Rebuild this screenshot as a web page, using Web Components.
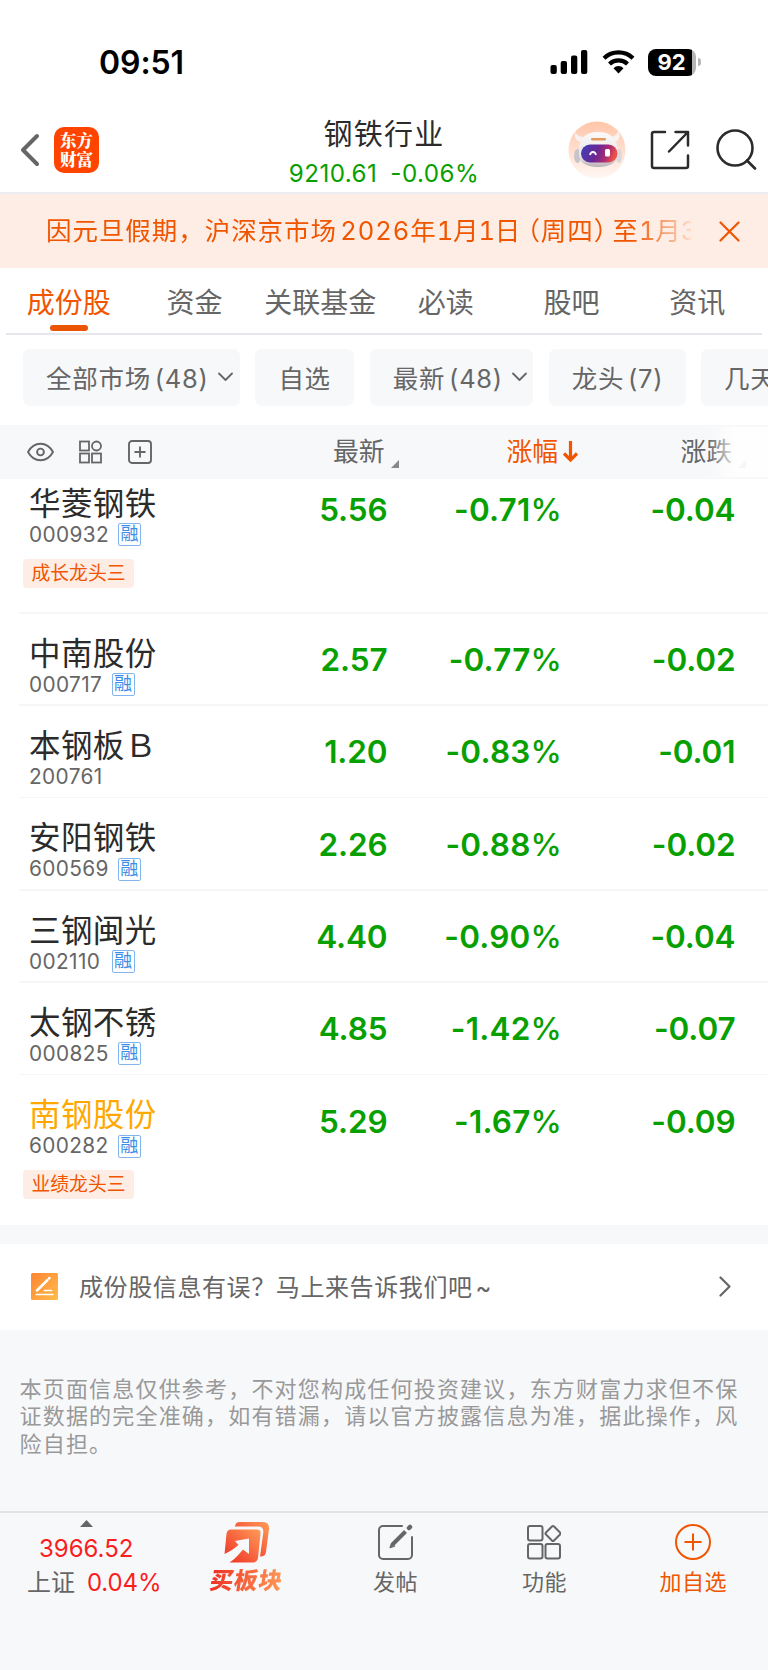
<!DOCTYPE html>
<html lang="zh-CN">
<head>
<meta charset="UTF-8">
<meta name="viewport" content="width=device-width, initial-scale=1">
<title>钢铁行业</title>
<style>
    html, body { margin: 0; padding: 0; }
    body {
        width: 768px;
        height: 1670px;
        overflow: hidden;
        background: #fff;
        font-family: Inter, "Noto Sans CJK SC", sans-serif;
        color: #666;
        --orange: #f05500;
        --green: #08a000;
        --panel: #f7f8fa;
        --peach: #feede5;
    }
</style>
</head>
<body>
<sector-page></sector-page>

<script>
// Small helper: attach an open root and fill it
class BaseElement extends HTMLElement {
    constructor() {
        super();
        this.attachShadow({ mode: 'open' });
    }

    connectedCallback() {
        this.shadowRoot.innerHTML = `<style>* { box-sizing: border-box; } svg { display: block; flex-shrink: 0; }</style>${this.template()}`;
    }
}

class StatusBar extends BaseElement {
    template() {
        return `
            <style>
                :host { display: flex; height: 112px; padding: 11px 67px 0 99px; justify-content: space-between; align-items: center; box-sizing: border-box; color: #000; }
                .time { font-size: 32px; font-weight: 600; letter-spacing: -0.1px; line-height: 40px; margin-top: 2px; }
                .right { display: flex; align-items: center; gap: 13.5px; padding-top: 1px; }
                .battery { display: flex; align-items: center; gap: 2px; }
                .cell {
                    width: 48px; height: 27px; border-radius: 8px; line-height: 27px; text-align: center;
                    background: linear-gradient(90deg, #000 44px, #b5b5b5 44px);
                    color: #fff; font-size: 22px; font-weight: 700; padding-right: 1px;
                }
                .cap { width: 3px; height: 8px; border-radius: 0 4px 4px 0; background: #b5b5b5; }
            </style>
            <span class="time">09:51</span>
            <div class="right">
                <svg width="38" height="24" viewBox="0 0 38 24">
                    <rect x="0.5" y="15" width="6.3" height="9" rx="2"/><rect x="10.7" y="11" width="6.3" height="13" rx="2"/>
                    <rect x="21" y="5.5" width="6.3" height="18.5" rx="2"/><rect x="31" y="0" width="6.3" height="24" rx="2"/>
                </svg>
                <svg width="33" height="24" viewBox="0 0 33 24" fill="none" stroke="#000" stroke-width="4.2">
                    <path d="M2 8.2a21 21 0 0 1 29 0M7.5 14a13 13 0 0 1 18 0"/>
                    <path d="M11.5 18.2a7 7 0 0 1 10 0L16.5 23.5Z" fill="#000" stroke="none"/>
                </svg>
                <div class="battery"><div class="cell">92</div><div class="cap"></div></div>
            </div>
        `;
    }
}
customElements.define('status-bar', StatusBar);

class PageHeader extends BaseElement {
    template() {
        return `
            <style>
                :host { display: grid; grid-template-columns: 1fr 200px 1fr; height: 82px; box-sizing: border-box; padding: 0 20px; border-bottom: 2px solid #ecedf0; }
                .left { display: flex; align-items: center; gap: 14px; padding-bottom: 5px; }
                .logo {
                    width: 45px; height: 46px; border-radius: 10px; background: #ff4400; color: #fff;
                    font: 900 16.5px/18.5px "Noto Serif CJK SC", "Noto Sans CJK SC", sans-serif;
                    display: grid; place-content: center; text-align: center;
                }
                .mid { text-align: center; white-space: nowrap; }
                .title { font-size: 29px; letter-spacing: 1.3px; line-height: 40px; color: #2b2b2b; margin-top: 3px; }
                .quote { font-size: 24.2px; line-height: 30px; margin-top: 4px; color: var(--green); display: flex; justify-content: center; gap: 13px; letter-spacing: 0.45px; }
                .right { display: flex; align-items: center; justify-content: flex-end; padding-bottom: 5px; margin-right: -9px; }
            </style>
            <div class="left">
                <svg width="20" height="34" viewBox="0 0 20 34" fill="none" stroke="#666" stroke-width="4" stroke-linecap="round" stroke-linejoin="round"><path d="M17 3 3 17l14 14"/></svg>
                <div class="logo"><span>东方</span><span>财富</span></div>
            </div>
            <div class="mid">
                <div class="title">钢铁行业</div>
                <div class="quote"><span>9210.61</span><span>-0.06%</span></div>
            </div>
            <div class="right">
                <svg width="58" height="58" viewBox="0 0 58 58" style="margin-right:24px">
                    <defs>
                        <linearGradient id="bg" x2="0" y2="1"><stop stop-color="#ffc5a8"/><stop offset="1" stop-color="#fff8f4"/></linearGradient>
                        <linearGradient id="head" x2="0" y2="1"><stop stop-color="#fbf9f9"/><stop offset=".7" stop-color="#e9e5e7"/><stop offset="1" stop-color="#b9b1b6"/></linearGradient>
                        <linearGradient id="face" x2="1" y2=".2"><stop stop-color="#3a41b8"/><stop offset=".5" stop-color="#6c2794"/><stop offset=".8" stop-color="#b12c70"/><stop offset="1" stop-color="#ec5149"/></linearGradient>
                    </defs>
                    <circle cx="29" cy="29" r="28.5" fill="url(#bg)"/>
                    <path d="M7 11c-1 6 1 9 6 10l5-5c-6 0-9-1-11-5ZM50 10c3 5 2 10-4 11l-6-5c6 0 9-2 10-6Z" fill="#f7f1f0"/>
                    <ellipse cx="9.5" cy="35" rx="3.5" ry="7" fill="#c9c4c9"/><ellipse cx="51" cy="35" rx="3" ry="7" fill="#ddd7db"/>
                    <path d="M11 30c0-12 6-19 19-19s19 7 20 19c1 11-7 16-20 16S10 41 11 30Z" fill="url(#head)"/>
                    <rect x="13" y="23.5" width="36.5" height="18" rx="9" fill="url(#face)"/>
                    <path d="M22 34c1-4 5-4 6 0" fill="none" stroke="#fff" stroke-width="1.8"/>
                    <rect x="37" y="28" width="5" height="7.5" rx="1.5" fill="#fff"/>
                    <rect x="23" y="17" width="15" height="2.4" rx="1.2" fill="#e39a5c"/>
                </svg>
                <svg width="40" height="40" viewBox="0 0 40 40" fill="none" stroke="#2b2b2b" stroke-width="2.5" stroke-linecap="round" stroke-linejoin="round" style="margin-right:26px">
                    <path d="M15 2H4a2 2 0 0 0-2 2v32a2 2 0 0 0 2 2h32a2 2 0 0 0 2-2V25.5M25.5 2H38v13.5M38 2 19 21.5"/>
                </svg>
                <svg width="41" height="41" viewBox="0 0 41 41" fill="none" stroke="#2b2b2b" stroke-width="2.6" stroke-linecap="round"><circle cx="19" cy="19" r="17.5"/><path d="m31 31.5 8 8"/></svg>
            </div>
        `;
    }
}
customElements.define('page-header', PageHeader);

class NoticeBar extends BaseElement {
    template() {
        return `
            <style>
                :host { display: flex; height: 74px; box-sizing: border-box; align-items: center; padding: 0 28px 0 46px; background: var(--peach); color: var(--orange); }
                .text {
                    width: 645px; overflow: hidden; white-space: nowrap; font-size: 25.5px; letter-spacing: 0.95px; word-spacing: -4.5px; line-height: 40px; flex-shrink: 0;
                    font-feature-settings: "tnum"; padding-bottom: 1px;
                    -webkit-mask-image: linear-gradient(90deg, #000 585px, transparent 652px);
                    mask-image: linear-gradient(90deg, #000 585px, transparent 652px);
                }
                svg { margin-left: auto; }
            </style>
            <div class="text"><slot></slot></div>
            <svg width="21" height="21" viewBox="0 0 21 21" stroke="currentColor" stroke-width="2.2" stroke-linecap="round"><path d="m1.5 1.5 18 18m0-18-18 18"/></svg>
        `;
    }
}
customElements.define('notice-bar', NoticeBar);

class TabStrip extends BaseElement {
    template() {
        const tabs = ['成份股', '资金', '关联基金', '必读', '股吧', '资讯'];
        return `
            <style>
                :host { display: grid; grid-template-columns: repeat(6, 1fr); height: 67px; margin: 0 6px; padding-right: 2px; box-sizing: border-box; border-bottom: 2px solid #e6e6ec; }
                .tab { display: flex; flex-direction: column; align-items: center; font-size: 28px; line-height: 40px; padding-top: 15px; white-space: nowrap; }
                .tab.active { color: var(--orange); }
                .active::after { content: ""; width: 38px; height: 6px; border-radius: 3px; background: #ea5504; margin-top: 2px; }
            </style>
            ${tabs.map((t, i) => `<div class="tab ${i === 0 ? 'active' : ''}">${t}</div>`).join('')}
        `;
    }
}
customElements.define('tab-strip', TabStrip);

class FilterChip extends BaseElement {
    template() {
        const arrow = this.hasAttribute('menu')
            ? '<svg width="15" height="10" viewBox="0 0 15 10" fill="none" stroke="#666" stroke-width="1.8" stroke-linecap="round" stroke-linejoin="round"><path d="m1 1.5 6.5 6.5L14 1.5"/></svg>'
            : '';
        return `
            <style>
                :host { display: flex; flex-shrink: 0; align-items: center; gap: 9px; height: 57px; border-radius: 7px; background: var(--panel); padding: 0 0 3px 23px; box-sizing: border-box; font-size: 25.5px; letter-spacing: 0.72px; word-spacing: -4px; white-space: nowrap; }
                svg { margin-top: 2px; }
            </style>
            <span><slot></slot></span>${arrow}
        `;
    }
}
customElements.define('filter-chip', FilterChip);

class TableHead extends BaseElement {
    template() {
        return `
            <style>
                :host { display: grid; grid-template-columns: 333px 173.5px 174px 87.5px; position: relative; height: 54px; align-items: center; background: var(--panel); font-size: 25.8px; line-height: 38px; }
                .tools { display: flex; align-items: center; padding-left: 27px; }
                .tools svg:nth-child(2) { margin: 0 26px 0 24.5px; }
                .col { display: flex; align-items: center; white-space: nowrap; }
                .corner { align-self: flex-end; margin: 0 0 2px 5px; }
                .sorted { color: var(--orange); }
                .sorted svg { margin-left: 5px; }
                .fade { position: absolute; right: 0; top: 2px; bottom: 2px; width: 60px; background: linear-gradient(90deg, rgba(255,255,255,0), rgba(255,255,255,.92) 30px); }
            </style>
            <div class="tools">
                <svg width="27" height="20" viewBox="0 0 27 20" fill="none" stroke="#666" stroke-width="1.9" stroke-linejoin="round"><path d="M1 10C7-1 20-1 26 10 20 21 7 21 1 10Z"/><circle cx="13.5" cy="10" r="3.4"/></svg>
                <svg width="23" height="24" viewBox="0 0 23 24" fill="none" stroke="#666" stroke-width="1.8"><rect x="1" y="1.5" width="9" height="9"/><circle cx="17.5" cy="6" r="4.5"/><rect x="1" y="13.5" width="9" height="9"/><rect x="13" y="13.5" width="9" height="9"/></svg>
                <svg width="24" height="24" viewBox="0 0 24 24" fill="none" stroke="#666" stroke-width="1.9"><rect x="1" y="1" width="22" height="22" rx="3"/><path d="M12 6.5v11M6.500 12h11"/></svg>
            </div>
            <div class="col">最新<svg class="corner" width="9" height="9" viewBox="0 0 9 9"><path d="M9 0v8H1Z" fill="#888"/></svg></div>
            <div class="col sorted">涨幅<svg width="15" height="22" viewBox="0 0 15 22" fill="none" stroke="currentColor" stroke-width="3.2"><path d="M7.5 0v19M1 12.5l6.5 6.5 6.5-6.5"/></svg></div>
            <div class="col">涨跌<svg class="corner" width="9" height="9" viewBox="0 0 9 9"><path d="M9 0v8H1Z" fill="#888"/></svg></div>
            <div class="fade"></div>
        `;
    }
}
customElements.define('table-head', TableHead);

class StockRow extends BaseElement {
    template() {
        const d = name => this.getAttribute(name) || '';
        return `
            <style>
                :host { display: grid; grid-template-columns: 250px 137.5px 174px 174px; height: 92.35px; position: relative; box-sizing: border-box; }
                :host([tag]) { height: 149.7px; }
                :host::after { content: ""; position: absolute; left: 19px; right: 0; bottom: 0; height: 1.5px; background: #f5f6f8; }
                :host(:last-child)::after { display: none; }
                .name { padding: 21px 0 0 29px; font-size: 31.5px; letter-spacing: 0.4px; line-height: 38px; color: #2b2b2b; white-space: nowrap; }
                :host([held]) .name { color: #ffa800; }
                .code { display: flex; align-items: center; gap: 9px; height: 24px; padding-left: 29px; font-size: 20.8px; letter-spacing: 0.38px; line-height: 24px; }
                .code > span:first-child { min-width: 73.5px; }
                .badge { width: 23px; height: 23px; border: 1.5px solid #82b5ee; border-radius: 2px; color: #3b8de8; font-size: 18px; letter-spacing: 0; line-height: 20px; text-align: center; display: flex; justify-content: center; }
                .tag { width: 111px; height: 29px; margin: 12px 0 0 23px; border-radius: 4px; background: var(--peach); color: var(--orange); font-size: 18.8px; line-height: 30px; text-align: center; white-space: nowrap; }
                .num { color: var(--green); font-size: 31.5px; font-weight: 600; letter-spacing: -0.1px; line-height: 38px; padding-top: 27.5px; text-align: right; }
                .rate { letter-spacing: 0.2px; margin-right: -0.5px; }
                .num i { font-style: normal; font-weight: 500; }
            </style>
            <div>
                <div class="name">${d('name')}</div>
                <div class="code"><span>${d('code')}</span>${this.hasAttribute('margin') ? '<span class="badge">融</span>' : ''}</div>
                ${this.hasAttribute('tag') ? `<div class="tag">${d('tag')}</div>` : ''}
            </div>
            <div class="num">${d('price')}</div>
            <div class="num rate">${d('rate')}<i>%</i></div>
            <div class="num">${d('change')}</div>
        `;
    }
}
customElements.define('stock-row', StockRow);

class StockTable extends BaseElement {
    template() {
        const rows = [
            { name: '华菱钢铁', code: '000932', margin: 1, tag: '成长龙头三', price: '5.56', rate: '-0.71', change: '-0.04' },
            { name: '中南股份', code: '000717', margin: 1, price: '2.57', rate: '-0.77', change: '-0.02' },
            { name: '本钢板Ｂ', code: '200761', price: '1.20', rate: '-0.83', change: '-0.01' },
            { name: '安阳钢铁', code: '600569', margin: 1, price: '2.26', rate: '-0.88', change: '-0.02' },
            { name: '三钢闽光', code: '002110', margin: 1, price: '4.40', rate: '-0.90', change: '-0.04' },
            { name: '太钢不锈', code: '000825', margin: 1, price: '4.85', rate: '-1.42', change: '-0.07' },
            { name: '南钢股份', code: '600282', margin: 1, held: 1, tag: '业绩龙头三', price: '5.29', rate: '-1.67', change: '-0.09' }
        ];
        // The list is scrolled, so the first row starts under the head
        return `
            <style>
                :host { display: flex; flex-direction: column; justify-content: flex-end; height: 746px; overflow: hidden; }
                stock-row { flex-shrink: 0; }
            </style>
            ${rows.map(r => `<stock-row ${Object.entries(r).map(([k, v]) => `${k}="${v}"`).join(' ')}></stock-row>`).join('')}
        `;
    }
}
customElements.define('stock-table', StockTable);

class FeedbackRow extends BaseElement {
    template() {
        return `
            <style>
                :host { display: flex; align-items: center; height: 86px; padding: 0 37px 2px 31px; background: #fff; font-size: 24px; letter-spacing: 0.6px; white-space: nowrap; }
                span { margin: -2px 0 0 21px; flex: 1; }
            </style>
            <svg width="27" height="27" viewBox="0 0 27 27" fill="none" stroke="#fff" stroke-linecap="round">
                <defs><linearGradient id="g" x2="1" y2="1"><stop stop-color="#ff8433"/><stop offset="1" stop-color="#ffbd4b"/></linearGradient></defs>
                <rect width="27" height="27" rx="1.5" fill="url(#g)" stroke="none"/>
                <path d="M6 17.5 16.5 7" stroke-width="2.5"/><path d="m18 5.500.5-.5" stroke-width="2.5"/><path d="M13.5 17.5h7M5 21.5h17" stroke-width="1.6"/>
            </svg>
            <span><slot></slot></span>
            <svg width="12" height="21" viewBox="0 0 12 21" fill="none" stroke="#666" stroke-width="2.2" stroke-linecap="round" stroke-linejoin="round"><path d="m1.5 1.5 9 9-9 9"/></svg>
        `;
    }
}
customElements.define('feedback-row', FeedbackRow);

class BottomBar extends BaseElement {
    template() {
        return `
            <style>
                :host { display: grid; grid-template-columns: 172.4px repeat(4, 148.8px); height: 159px; box-sizing: border-box; border-top: 2px solid #e2e4e7; font-size: 22px; }
                .index { padding-top: 7px; display: flex; flex-direction: column; align-items: center; font-size: 24px; line-height: 34px; white-space: nowrap; }
                .index b { font-weight: 400; color: #fa1e1e; }
                .index .row { display: flex; gap: 12px; padding-left: 16px; }
                .index .row b { letter-spacing: -0.1px; }
                .item { display: flex; flex-direction: column; align-items: center; padding-top: 8px; line-height: 32px; letter-spacing: 0.5px; }
                .item svg { height: 44px; margin-bottom: 1px; }
                .item.buy span {
                    font-weight: 900; font-size: 23.5px; letter-spacing: 0.7px; transform: skewX(-9deg); padding: 0 2px;
                    background: linear-gradient(90deg, #ed2e22, #ff9c57); -webkit-background-clip: text; background-clip: text; color: transparent;
                    margin-top: -1px;
                }
                .item.add { color: var(--orange); }
            </style>
            <div class="index">
                <svg width="13" height="7" viewBox="0 0 13 7"><path d="M6.5 0 13 7H0Z" fill="#666"/></svg>
                <b style="margin-top:5px">3966.52</b>
                <div class="row"><span>上证</span><b>0.04%</b></div>
            </div>
            <div class="item buy">
                <svg width="46" height="44" viewBox="0 0 46 44">
                    <defs>
                        <linearGradient id="b" x1="0" y1="1" x2="1" y2="0"><stop stop-color="#ee2e24"/><stop offset="1" stop-color="#ff9b57"/></linearGradient>
                    </defs>
                    <path d="M11 5.5Q11.5 1 15.5 1h23q7 0 6.5 7l-3 23q-.5 4-4.5 4.5h-1.5l3.300-24q.5-6-5-6Z" fill="url(#b)"/>
                    <path d="M7 8.5h26q4 0 3.5 4L34 37q-.5 4-5 4.5H5.5C11 38 15 33 19 28.5l6 4.500V17.5L11 20l3.500 4C10 28 5 31 .5 33L2.500 13q.5-4.5 4.5-4.5Z" fill="url(#b)"/>
                </svg>
                <span>买板块</span>
            </div>
            <div class="item">
                <svg width="36" height="44" viewBox="0 0 36 44" fill="none" stroke="#666" stroke-width="2" stroke-linecap="round" stroke-linejoin="round">
                    <path d="M24 5H5a4 4 0 0 0-4 4v25a4 4 0 0 0 4 4h25a4 4 0 0 0 4-4V16"/><path d="m14.5 23.5 13-13" stroke-width="4" stroke-linecap="butt"/><path d="m12 26.500 1.500-4.500 3 3Z" fill="#666" stroke-width="1"/><path d="m31 7 1-1" stroke-width="4.5"/>
                </svg>
                <span>发帖</span>
            </div>
            <div class="item">
                <svg width="34" height="44" viewBox="0 0 34 44" fill="none" stroke="#666" stroke-width="2" stroke-linejoin="round">
                    <rect x="1" y="5" width="14.5" height="14.5" rx="2"/><rect x="1" y="23" width="14.5" height="14.5" rx="2"/><rect x="18.5" y="23" width="14.5" height="14.5" rx="2"/>
                    <rect x="20.3" y="6.8" width="11.4" height="11.4" rx="1.5" transform="rotate(45 26 12.5)"/>
                </svg>
                <span>功能</span>
            </div>
            <div class="item add">
                <svg width="38" height="44" viewBox="0 0 38 44" fill="none" stroke="currentColor" stroke-width="2"><circle cx="19" cy="21" r="17"/><path d="M19 12.5v17M10.500 21h17"/></svg>
                <span>加自选</span>
            </div>
        `;
    }
}
customElements.define('bottom-bar', BottomBar);

class SectorPage extends BaseElement {
    template() {
        return `
            <style>
                :host { display: flex; flex-direction: column; height: 1670px; background: #fff; overflow: hidden; }
                :host > * { flex-shrink: 0; }
                .date { letter-spacing: -0.15px; }
                .open, .close { font-feature-settings: "halt"; }
                .open { margin-left: 7px; }
                .close { margin-right: 5px; }
                .tilde { margin-left: 3px; }
                .filters { display: flex; gap: 15.4px; height: 90px; padding: 14px 0 0 23px; overflow: hidden; box-sizing: border-box; }
                .bottom { flex: 1; display: flex; flex-direction: column; background: var(--panel); }
                feedback-row { margin-top: 19px; box-sizing: border-box; }
                p { margin: 46px 0 0; padding-left: 19.5px; font-size: 22px; letter-spacing: 1.19px; line-height: 27.3px; color: #999; white-space: nowrap; }
                bottom-bar { margin-top: auto; }
            </style>
            <status-bar></status-bar>
            <page-header></page-header>
            <notice-bar>因元旦假期，沪深京市场 2026年<span class="date">1月1日</span><span class="open">（</span>周四<span class="close">）</span>至<span class="date">1月3日</span></notice-bar>
            <tab-strip></tab-strip>
            <div class="filters">
                <filter-chip menu style="width:217px">全部市场 (48)</filter-chip>
                <filter-chip style="width:99px">自选</filter-chip>
                <filter-chip menu style="width:163.5px">最新 (48)</filter-chip>
                <filter-chip style="width:137px">龙头 (7)</filter-chip>
                <filter-chip style="width:140px">几天几板</filter-chip>
            </div>
            <table-head></table-head>
            <stock-table></stock-table>
            <div class="bottom">
                <feedback-row>成份股信息有误？马上来告诉我们吧<span class="tilde">~</span></feedback-row>
                <p>本页面信息仅供参考，不对您构成任何投资建议，东方财富力求但不保<br>证数据的完全准确，如有错漏，请以官方披露信息为准，据此操作，风<br>险自担。</p>
                <bottom-bar></bottom-bar>
            </div>
        `;
    }
}
customElements.define('sector-page', SectorPage);
</script>
</body>
</html>
